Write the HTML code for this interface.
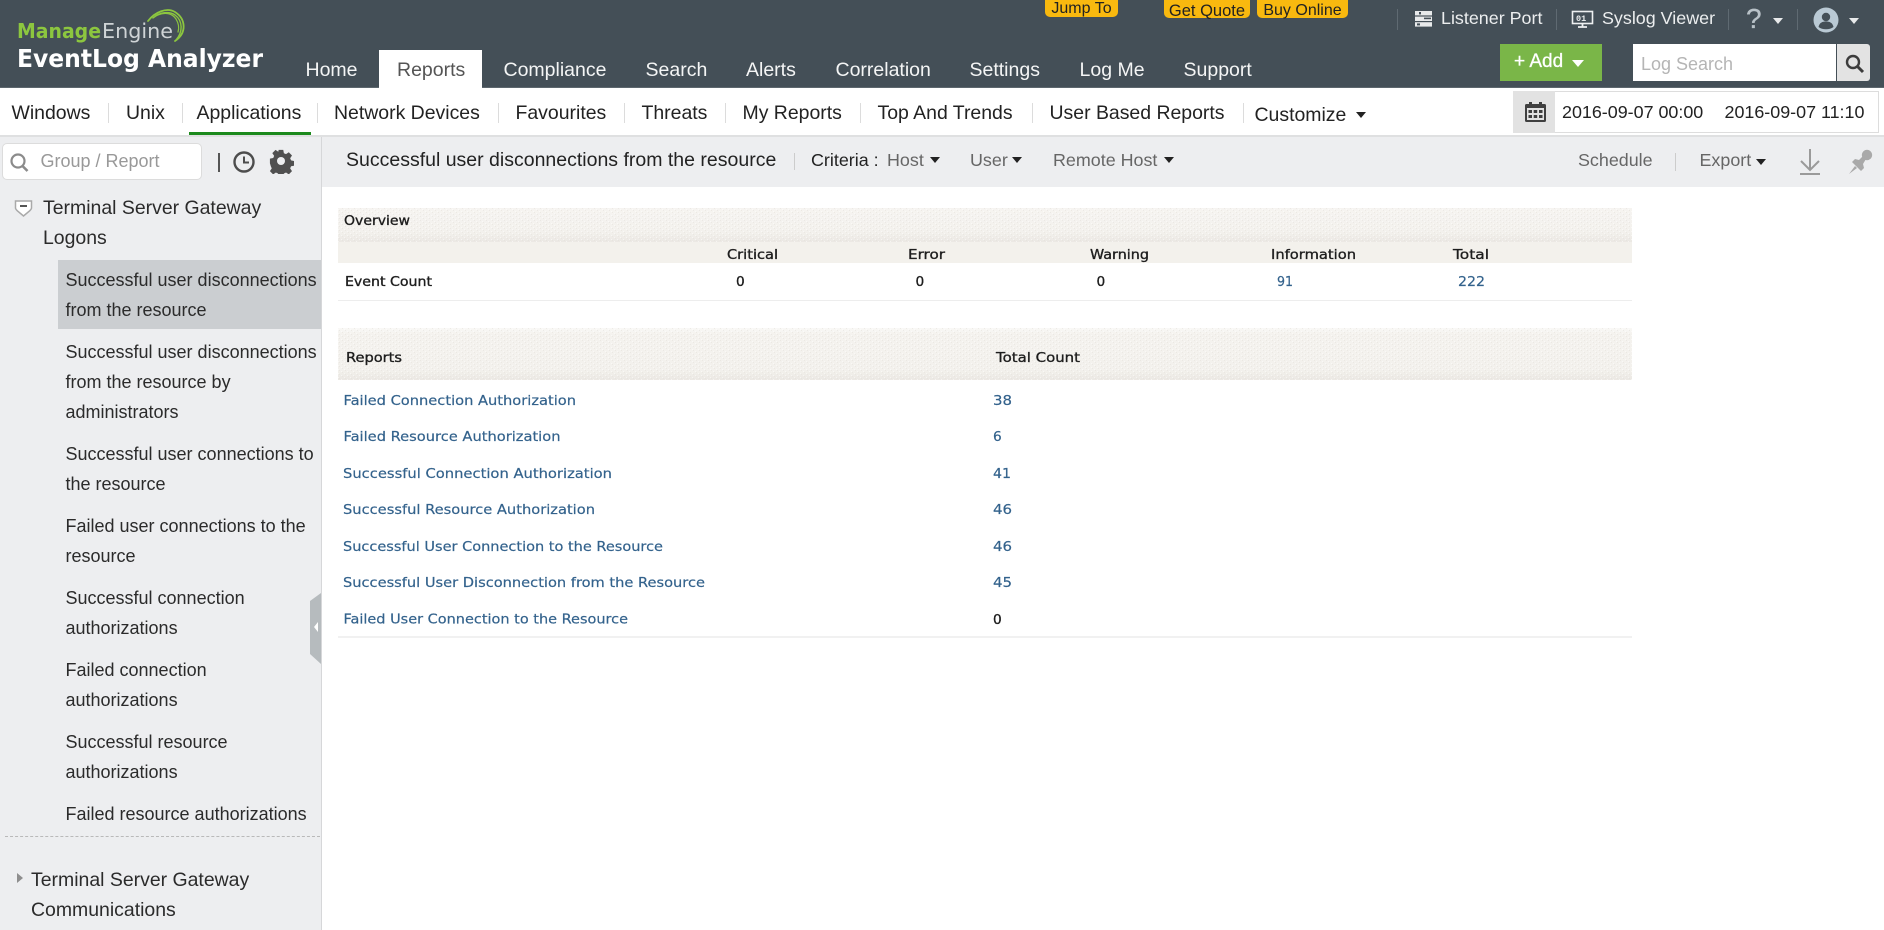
<!DOCTYPE html>
<html><head><meta charset="utf-8"><title>EventLog Analyzer</title>
<style>
html,body{margin:0;padding:0;width:1884px;height:930px;overflow:hidden;background:#fff}
body{position:relative;font-family:"Liberation Sans",Arial,sans-serif;color:#222}
.a{position:absolute}
.t{position:absolute;white-space:nowrap;line-height:30px;height:30px}
.n{font-size:19.5px;top:55px;color:#f4f5f5}
.s{font-size:19.45px;top:98px;color:#222}
.l{font-size:18px;left:65.5px;color:#2b2b2b}
.g{font-size:19.45px;color:#2b2b2b}
.b{font-size:17.9px;top:145px;color:#666}
.h{font-size:17.9px;top:3px;color:#eceeef}
.sep{position:absolute;width:1px;background:#dcdcdc}
.tag{position:absolute;top:0;background:#f9b90f;border-radius:0 0 5px 5px;color:#222;text-align:center;white-space:nowrap}
.c{position:absolute;width:0;height:0;border-left:5px solid transparent;border-right:5px solid transparent;border-top:6px solid #222}
</style></head><body>

<!-- header -->
<div class="a" style="left:0;top:0;width:1884px;height:88px;background:#444f57"></div>
<div class="a" style="left:0;top:87px;width:1884px;height:1px;background:#5d676e"></div>
<svg class="a" style="left:0;top:0;filter:blur(.35px)" width="300" height="88">
 <g fill="none" stroke="#8cc63f" stroke-linecap="round">
  <path d="M148 21C155 12 167 7 175 12C186 19 187 33 175 41" stroke-width="1.8"/>
  <path d="M153 18C160 12 169 11 175 15C183 21 183 32 176 40" stroke-width="1.4"/>
  <path d="M158 15C165 12 172 13 176 19C179 24 179 29 178 32" stroke-width="1.2"/>
 </g>
 <text x="17" y="38" font-family="DejaVu Sans" font-weight="700" font-size="20.5" fill="#8cc63f" textLength="84" lengthAdjust="spacingAndGlyphs">Manage</text>
 <text x="102" y="38" font-family="DejaVu Sans" font-size="20.5" fill="#cfd4d6" textLength="71" lengthAdjust="spacingAndGlyphs">Engine</text>
 <text x="17" y="67" font-family="DejaVu Sans" font-weight="700" font-size="24.5" fill="#fff" textLength="246" lengthAdjust="spacingAndGlyphs">EventLog Analyzer</text>
</svg>
<div class="a" style="left:379px;top:50px;width:103px;height:38px;background:#fff"></div>
<span class="t n" style="left:305.5px">Home</span>
<span class="t n" style="left:397px;color:#555">Reports</span>
<span class="t n" style="left:503.5px">Compliance</span>
<span class="t n" style="left:645.5px">Search</span>
<span class="t n" style="left:746px">Alerts</span>
<span class="t n" style="left:835.5px">Correlation</span>
<span class="t n" style="left:969.5px">Settings</span>
<span class="t n" style="left:1079.5px">Log Me</span>
<span class="t n" style="left:1183.5px">Support</span>

<div class="tag" style="left:1045px;width:73px;height:17px;font-size:16px;line-height:18px">Jump To</div>
<div class="tag" style="left:1164px;width:86px;height:18px;font-size:16.5px;line-height:22px">Get Quote</div>
<div class="tag" style="left:1257px;width:91px;height:18px;font-size:16px;line-height:22px">Buy Online</div>

<div class="sep" style="left:1397px;top:9px;height:21px;background:#5f6a72"></div>
<svg class="a" style="left:1414px;top:10px" width="20" height="18" fill="#e8eaeb">
 <rect x="1" y="1" width="17" height="4.4"/><rect x="1" y="6.6" width="17" height="4.4"/><rect x="1" y="12.2" width="17" height="4.4"/>
 <rect x="5" y="2" width="2" height="2.4" fill="#444f57"/><rect x="10" y="7.6" width="7" height="1.6" fill="#444f57"/><rect x="3" y="13.4" width="3" height="2" fill="#444f57"/>
</svg>
<span class="t h" style="left:1441px">Listener Port</span>
<div class="sep" style="left:1556px;top:9px;height:21px;background:#5f6a72"></div>
<svg class="a" style="left:1571px;top:10px" width="24" height="19">
 <rect x="1.5" y="1.5" width="20" height="12" fill="none" stroke="#eef0f1" stroke-width="1.6"/>
 <text x="5" y="11" font-family="Liberation Mono" font-size="8.5" font-weight="700" fill="#eef0f1">01</text>
 <path d="M7 17h9M11.5 14v3" stroke="#eef0f1" stroke-width="1.8"/>
</svg>
<span class="t h" style="left:1602px">Syslog Viewer</span>
<div class="sep" style="left:1728px;top:9px;height:21px;background:#5f6a72"></div>
<span class="t" style="left:1746px;top:4px;font-size:28px;color:#b9c2c8;-webkit-text-stroke:.3px #b9c2c8">?</span>
<div class="c" style="left:1773px;top:18px;border-top-color:#e8eaeb"></div>
<div class="sep" style="left:1797px;top:9px;height:21px;background:#5f6a72"></div>
<svg class="a" style="left:1813px;top:7px" width="26" height="26">
 <circle cx="13" cy="13" r="12.5" fill="#b9c9d4"/>
 <circle cx="13" cy="10" r="4.2" fill="#444f57"/>
 <path d="M5.5 20c1-4.5 4-5.5 7.5-5.5s6.5 1 7.5 5.5c-4 3-11 3-15 0z" fill="#444f57"/>
</svg>
<div class="c" style="left:1849px;top:18px;border-top-color:#e8eaeb"></div>

<div class="a" style="left:1500px;top:44px;width:102px;height:37px;background:#7ab648"></div>
<span class="t" style="left:1514px;top:47px;font-size:19px;color:#fff;-webkit-text-stroke:.3px #fff">+ Add</span>
<div class="c" style="left:1572px;top:60px;border-top-color:#fff;border-left-width:6.5px;border-right-width:6.5px;border-top-width:7px"></div>
<div class="a" style="left:1633px;top:44px;width:203px;height:37px;background:#fff"></div>
<span class="t" style="left:1641px;top:49px;font-size:18px;color:#b5b5b5">Log Search</span>
<div class="a" style="left:1837px;top:44px;width:33px;height:37px;background:#e3e3e3;border-radius:0 3px 3px 0"></div>
<svg class="a" style="left:1844px;top:53px" width="22" height="22" fill="none" stroke="#3c3c3c">
 <circle cx="9" cy="9" r="6" stroke-width="2.4"/><path d="M13.5 13.5l5.5 5.5" stroke-width="3"/>
</svg>

<!-- subnav -->
<span class="t s" style="left:11.5px">Windows</span>
<div class="sep" style="left:108px;top:103px;height:20px"></div>
<span class="t s" style="left:126px">Unix</span>
<div class="sep" style="left:182px;top:103px;height:20px"></div>
<span class="t s" style="left:196.5px">Applications</span>
<div class="sep" style="left:317px;top:103px;height:20px"></div>
<span class="t s" style="left:334px">Network Devices</span>
<div class="sep" style="left:498px;top:103px;height:20px"></div>
<span class="t s" style="left:515.5px">Favourites</span>
<div class="sep" style="left:624px;top:103px;height:20px"></div>
<span class="t s" style="left:641.5px">Threats</span>
<div class="sep" style="left:725px;top:103px;height:20px"></div>
<span class="t s" style="left:742.5px">My Reports</span>
<div class="sep" style="left:860px;top:103px;height:20px"></div>
<span class="t s" style="left:877.5px">Top And Trends</span>
<div class="sep" style="left:1032px;top:103px;height:20px"></div>
<span class="t s" style="left:1049.5px">User Based Reports</span>
<div class="sep" style="left:1243px;top:103px;height:20px"></div>
<span class="t s" style="left:1254.5px;top:100px">Customize</span>
<div class="c" style="left:1356px;top:112px"></div>
<div class="a" style="left:189px;top:132px;width:122px;height:3px;background:#1d8a1d"></div>
<div class="a" style="left:0;top:135px;width:1884px;height:2px;background:#dfe0e1"></div>

<div class="a" style="left:1513px;top:91px;width:364px;height:40px;border:1px solid #ddd;background:#fff"></div>
<div class="a" style="left:1513px;top:91px;width:42px;height:42px;background:#e2e2e2"></div>
<svg class="a" style="left:1524px;top:102px" width="23" height="20">
 <rect x="1" y="2" width="21" height="18" rx="1.5" fill="#3f3f3f"/>
 <rect x="5" y="0" width="3" height="4" fill="#3f3f3f"/><rect x="15" y="0" width="3" height="4" fill="#3f3f3f"/>
 <rect x="3" y="6" width="17" height="12" fill="#e2e2e2"/>
 <g fill="#3f3f3f"><rect x="4.5" y="8" width="3.5" height="3"/><rect x="9.7" y="8" width="3.5" height="3"/><rect x="15" y="8" width="3.5" height="3"/><rect x="4.5" y="13" width="3.5" height="3"/><rect x="9.7" y="13" width="3.5" height="3"/><rect x="15" y="13" width="3.5" height="3"/></g>
</svg>
<span class="t" style="left:1562px;top:97px;font-size:17.9px;color:#222">2016-09-07 00:00</span>
<span class="t" style="left:1724.5px;top:97px;font-size:17.9px;color:#222">2016-09-07 11:10</span>

<!-- sidebar -->
<div class="a" style="left:0;top:137px;width:321px;height:793px;background:#edeef0;border-right:1px solid #d6d7d9"></div>
<div class="a" style="left:2px;top:143px;width:198px;height:35px;background:#fff;border:1px solid #dcdcdc;border-radius:5px"></div>
<svg class="a" style="left:9px;top:152px" width="22" height="22" fill="none" stroke="#8b8b8b">
 <circle cx="9" cy="9" r="6.5" stroke-width="2.2"/><path d="M13.5 14l5 5" stroke-width="2.6"/>
</svg>
<span class="t" style="left:40.5px;top:146px;font-size:18px;color:#999">Group / Report</span>
<div class="a" style="left:218px;top:153px;width:2px;height:19px;background:#555"></div>
<svg class="a" style="left:232px;top:150px" width="24" height="24" fill="none" stroke="#4d4d4d">
 <circle cx="12" cy="12" r="9.5" stroke-width="2.4"/><path d="M12 6.5v6h5" stroke-width="2"/>
</svg>
<svg class="a" style="left:268px;top:148px" width="26" height="26" fill="#505050">
 <path d="M10.5 1h5l.7 3.6 2.3 1 3-2 3.5 3.5-2 3 1 2.3 3.6.7v5l-3.6.7-1 2.3 2 3-3.5 3.5-3-2-2.3 1-.7 3.6h-5l-.7-3.6-2.3-1-3 2-3.5-3.5 2-3-1-2.3L1 15.5v-5l3.6-.7 1-2.3-2-3L7.1 1l3 2 .4-2z" transform="translate(1 1) scale(.92)"/>
 <circle cx="13" cy="13" r="4" fill="#edeef0"/>
</svg>

<svg class="a" style="left:14px;top:199px" width="19" height="19">
 <path d="M1.5 2h16v7c0 1-1 2-2 3l-6 5-6-5c-1-1-2-2-2-3z" fill="#fff" stroke="#a9a9a9" stroke-width="1.5"/>
 <rect x="6" y="6" width="7" height="2" fill="#555"/>
</svg>
<span class="t g" style="left:43px;top:192.5px">Terminal Server Gateway</span>
<span class="t g" style="left:43px;top:222.5px">Logons</span>
<div class="a" style="left:58px;top:260px;width:263px;height:69px;background:#cbced1"></div>
<span class="t l" style="top:265px">Successful user disconnections</span>
<span class="t l" style="top:295px">from the resource</span>
<span class="t l" style="top:337px">Successful user disconnections</span>
<span class="t l" style="top:367px">from the resource by</span>
<span class="t l" style="top:397px">administrators</span>
<span class="t l" style="top:439px">Successful user connections to</span>
<span class="t l" style="top:469px">the resource</span>
<span class="t l" style="top:511px">Failed user connections to the</span>
<span class="t l" style="top:541px">resource</span>
<span class="t l" style="top:583px">Successful connection</span>
<span class="t l" style="top:613px">authorizations</span>
<span class="t l" style="top:655px">Failed connection</span>
<span class="t l" style="top:685px">authorizations</span>
<span class="t l" style="top:727px">Successful resource</span>
<span class="t l" style="top:757px">authorizations</span>
<span class="t l" style="top:799px">Failed resource authorizations</span>
<div class="a" style="left:5px;top:836px;width:315px;border-top:1px dashed #b9b9b9"></div>
<div class="a" style="left:17px;top:873px;width:0;height:0;border-top:5.5px solid transparent;border-bottom:5.5px solid transparent;border-left:6px solid #8e8e8e"></div>
<span class="t g" style="left:31px;top:864.5px">Terminal Server Gateway</span>
<span class="t g" style="left:31px;top:894.5px">Communications</span>
<svg class="a" style="left:310px;top:593px" width="12" height="72">
 <path d="M11 0L0 8V61L11 71z" fill="#b6bbbe"/>
 <path d="M8 29L4 34L8 39z" fill="#fff"/>
</svg>

<!-- toolbar -->
<div class="a" style="left:322px;top:137px;width:1562px;height:50px;background:#edeef0"></div>
<span class="t" style="left:346px;top:144.5px;font-size:19.5px;color:#222">Successful user disconnections from the resource</span>
<div class="sep" style="left:794px;top:153px;height:17px;background:#ccc"></div>
<span class="t b" style="left:811px;top:144.5px;color:#222">Criteria :</span>
<span class="t b" style="left:887px;top:144.5px">Host</span><div class="c" style="left:930px;top:157px"></div>
<span class="t b" style="left:970px;top:144.5px">User</span><div class="c" style="left:1012px;top:157px"></div>
<span class="t b" style="left:1053px;top:144.5px">Remote Host</span><div class="c" style="left:1164px;top:157px"></div>
<span class="t b" style="left:1578px;top:145px">Schedule</span>
<div class="sep" style="left:1675px;top:153px;height:18px;background:#ccc"></div>
<span class="t b" style="left:1699.5px;top:145px">Export</span><div class="c" style="left:1756px;top:159px"></div>
<svg class="a" style="left:1798px;top:148px" width="24" height="28" fill="none" stroke="#9a9a9a" stroke-width="2">
 <path d="M12 1V22M3 13L12 22L21 13M2 26H22"/>
</svg>
<svg class="a" style="left:1847px;top:148px" width="28" height="28" fill="#a9a9a9">
 <circle cx="20" cy="7" r="5.2"/>
 <path d="M16 8L19 11L16 16L17 20L14 23L5 14L8 11L12 12z"/>
 <path d="M8 18L2 26L10 20z"/>
</svg>

<!-- tables -->
<svg class="a" style="left:0;top:0;filter:blur(.3px)" width="1884" height="930">
 <defs>
  <pattern id="tx" width="6" height="4" patternUnits="userSpaceOnUse">
   <rect x="0" y="0" width="1" height="1" fill="#e4e0da" opacity=".55"/><rect x="3" y="2" width="1" height="1" fill="#e4e0da" opacity=".55"/><rect x="2" y="1" width="1" height="1" fill="#fff" opacity=".5"/><rect x="5" y="3" width="1" height="1" fill="#fff" opacity=".5"/>
  </pattern>
  <linearGradient id="b1" x1="0" y1="0" x2="0" y2="1"><stop offset="0" stop-color="#f6f4f1"/><stop offset=".7" stop-color="#f3f1ed"/><stop offset="1" stop-color="#ebe8e3"/></linearGradient>
  <linearGradient id="b2" x1="0" y1="0" x2="0" y2="1"><stop offset="0" stop-color="#f9f8f6"/><stop offset=".12" stop-color="#f4f2ee"/><stop offset=".8" stop-color="#f3f1ed"/><stop offset="1" stop-color="#ebe8e3"/></linearGradient>
 </defs>
 <rect x="338" y="208" width="1294" height="34" fill="url(#b1)"/>
 <rect x="338" y="208" width="1294" height="34" fill="url(#tx)"/>
 <rect x="338" y="242" width="1294" height="21" fill="#f3f1ec"/>
 <rect x="338" y="300" width="1294" height="1" fill="#ededed"/>
 <rect x="338" y="328" width="1294" height="52" fill="url(#b2)"/>
 <rect x="338" y="328" width="1294" height="52" fill="url(#tx)"/>
 <rect x="338" y="636" width="1294" height="2" fill="#f1f1f1"/>
 <g font-family="DejaVu Sans" font-size="13.7" fill="#1e1e1e" stroke="#1e1e1e" stroke-width=".35">
  <text x="344" y="225" textLength="66" lengthAdjust="spacingAndGlyphs">Overview</text>
  <text x="727" y="259" textLength="51" lengthAdjust="spacingAndGlyphs">Critical</text>
  <text x="908" y="259" textLength="37" lengthAdjust="spacingAndGlyphs">Error</text>
  <text x="1090" y="259" textLength="59" lengthAdjust="spacingAndGlyphs">Warning</text>
  <text x="1271" y="259" textLength="85" lengthAdjust="spacingAndGlyphs">Information</text>
  <text x="1453" y="259" textLength="36" lengthAdjust="spacingAndGlyphs">Total</text>
  <text x="345" y="286" textLength="87" lengthAdjust="spacingAndGlyphs">Event Count</text>
  <text x="736" y="286">0</text><text x="915.5" y="286">0</text><text x="1096.5" y="286">0</text>
  <text x="346" y="362" textLength="56" lengthAdjust="spacingAndGlyphs">Reports</text>
  <text x="996" y="362" textLength="84" lengthAdjust="spacingAndGlyphs">Total Count</text>
  <text x="993" y="624">0</text>
 </g>
 <g font-family="DejaVu Sans" font-size="13.7" fill="#33628c" stroke="#33628c" stroke-width=".2">
  <text x="1277" y="286" textLength="16" lengthAdjust="spacingAndGlyphs">91</text>
  <text x="1458" y="286" textLength="27" lengthAdjust="spacingAndGlyphs">222</text>
  <text x="343.5" y="405" textLength="232.5" lengthAdjust="spacingAndGlyphs">Failed Connection Authorization</text>
  <text x="343.5" y="441" textLength="217" lengthAdjust="spacingAndGlyphs">Failed Resource Authorization</text>
  <text x="343" y="478" textLength="269" lengthAdjust="spacingAndGlyphs">Successful Connection Authorization</text>
  <text x="343" y="514" textLength="252" lengthAdjust="spacingAndGlyphs">Successful Resource Authorization</text>
  <text x="343" y="551" textLength="320" lengthAdjust="spacingAndGlyphs">Successful User Connection to the Resource</text>
  <text x="343" y="587" textLength="362" lengthAdjust="spacingAndGlyphs">Successful User Disconnection from the Resource</text>
  <text x="343.5" y="623.5" textLength="284.5" lengthAdjust="spacingAndGlyphs">Failed User Connection to the Resource</text>
  <text x="993" y="405" textLength="19" lengthAdjust="spacingAndGlyphs">38</text>
  <text x="993" y="441">6</text>
  <text x="993" y="478" textLength="18" lengthAdjust="spacingAndGlyphs">41</text>
  <text x="993" y="514" textLength="19" lengthAdjust="spacingAndGlyphs">46</text>
  <text x="993" y="551" textLength="19" lengthAdjust="spacingAndGlyphs">46</text>
  <text x="993" y="587" textLength="19" lengthAdjust="spacingAndGlyphs">45</text>
 </g>
</svg>
</body></html>
